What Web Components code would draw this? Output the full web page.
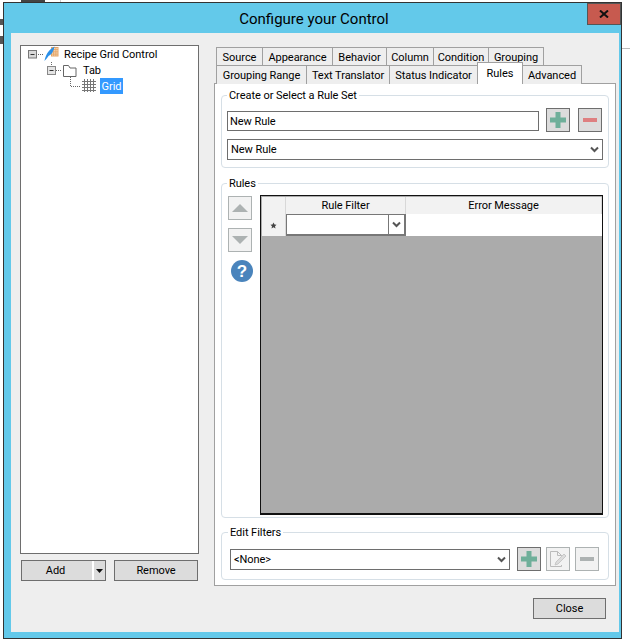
<!DOCTYPE html>
<html><head><meta charset="utf-8">
<style>
html,body{margin:0;padding:0;background:#fff;width:630px;height:643px;overflow:hidden}
body{position:relative;font:11px/15px Roboto,sans-serif;letter-spacing:-.05px;color:#000}
x-window{position:absolute;left:3px;top:2px}
.bg{position:absolute;background:#999}
</style></head><body>
<div class="bg" style="left:21px;top:0;width:24px;height:2px;background:#444"></div>
<div class="bg" style="left:60px;top:0;width:1px;height:2px;background:#ccc"></div>
<div class="bg" style="left:0;top:19px;width:3px;height:6px;background:#555"></div>
<div class="bg" style="left:0;top:36px;width:3px;height:8px;background:#555"></div>
<div class="bg" style="left:622px;top:48px;width:8px;height:1px;background:#bbb"></div>
<x-window></x-window>

<template id="t-window">
<style>
:host{display:flex;flex-direction:column;box-sizing:border-box;width:619px;height:637px;border:1px solid #333;background:#63c9ea}
.title{height:30px;flex:none;display:flex;justify-content:center;padding:7px 0 0 3px;box-sizing:border-box;font-size:15px;line-height:18px;letter-spacing:0;position:relative}
.x{position:absolute;right:0;top:0;width:34px;height:22px;box-sizing:border-box;background:#c75a4f;border:1px solid #555;display:flex;align-items:center;justify-content:center}
.client{flex:1;margin:0 2px 6px 7px;background:#eee;display:grid;grid-template-columns:179px 402px;column-gap:15px;grid-template-rows:541px auto;padding:12px 3px 0 9px;box-sizing:border-box}
.left{display:flex;flex-direction:column;gap:6px}
.btns{display:flex;gap:8px;padding:0 1px}
.foot{grid-column:1/3;display:flex;justify-content:flex-end;padding:12px 10px 0 0}
</style>
<div class="title"><span>Configure your Control</span>
<div class="x"><svg width="10" height="8" viewBox="0 0 10 8"><path d="M1 0.500L9 7.500M9 0.500L1 7.500" stroke="#111" stroke-width="2" fill="none"/></svg></div></div>
<div class="client">
<div class="left">
<x-tree></x-tree>
<div class="btns"><x-button w="85" h="21" split>Add</x-button><x-button w="84" h="21">Remove</x-button></div>
</div>
<x-config></x-config>
<div class="foot"><x-button w="73" h="21">Close</x-button></div>
</div>
</template>

<template id="t-button">
<style>
:host{display:flex;box-sizing:border-box;border:1px solid #6e6e6e;background:#dcdcdc;align-items:center;justify-content:center;position:relative}
.a{position:absolute;right:0;top:0;bottom:0;width:13px;border-left:2px solid #fff;box-sizing:border-box;display:flex;align-items:center;justify-content:center}
.lab{display:block}
</style><span class="lab"><slot></slot></span>
</template>

<template id="t-icon">
<style>
:host{display:flex;box-sizing:border-box;width:24px;height:24px;border:1px solid #6e6e6e;background:#dcdcdc;align-items:center;justify-content:center}
:host([off]){border-color:#adb2b2;background:#f2f2f2}
svg{display:block}
</style><span id="s" style="display:contents"></span>
</template>

<template id="t-tree">
<style>
:host{display:block;box-sizing:border-box;height:509px;background:#fff;border:1px solid #6e6e6e}
.row{height:16px;display:flex;align-items:center;position:relative}
.row svg{display:block;flex:none}
.sel{background:#3399ff;color:#fff;height:16px;width:23px;display:flex;justify-content:center;align-items:center}
</style>
<div class="row" style="padding-left:6px"><svg width="37" height="16" viewBox="0 0 37 16">
<rect x="1.500" y="4.500" width="8" height="7.500" fill="#d8d8d8" stroke="#777"/><path d="M3.500 8.500h4" stroke="#333"/>
<path d="M11 8.500h6" stroke="#666" stroke-dasharray="1 1"/>
<g stroke="#e3a467" fill="#fbe6cc"><rect x="24.500" y="1.500" width="6.500" height="8.500"/><path d="M26.700 1.500v8.500M28.900 1.500v8.500M24.500 3.700h6.500M24.500 5.900h6.500M24.500 8.100h6.500" fill="none"/></g>
<path d="M17.500 15C18.500 9.500 21 4 27.500 0.500C26.500 5 25 8.500 21.500 10C20 12 19 13.500 17.500 15Z" fill="#2a8fe8"/>
</svg><span>Recipe Grid Control</span></div>
<div class="row" style="padding-left:25px"><svg width="33" height="16" viewBox="0 0 33 16" style="overflow:visible">
<path d="M5.500 0v4" stroke="#666" stroke-dasharray="1 1"/>
<rect x="1.500" y="4.500" width="8" height="8" fill="#e4e4e4" stroke="#888"/><path d="M3.500 8.500h4" stroke="#333"/>
<path d="M10 8.500h6" stroke="#666" stroke-dasharray="1 1"/>
<path d="M17.500 3.500h5l1.500 2.500h6v8.500h-12.500z" fill="#fff" stroke="#666"/>
</svg><span style="margin-left:4px">Tab</span></div>
<div class="row" style="padding-left:47px"><svg width="29" height="16" viewBox="0 0 29 16" style="overflow:visible">
<path d="M2.500 -1v9.500h10" stroke="#666" stroke-dasharray="1 1" fill="none"/>
<path d="M14 3.500h14M14 6.500h14M14 9.500h14M14 12.500h14M16.500 1v13M19.500 1v13M22.500 1v13M25.500 1v13" stroke="#777" fill="none"/>
</svg><span class="sel" style="margin-left:3px">Grid</span></div>
</template>

<template id="t-tab">
<style>
:host{display:flex;box-sizing:border-box;height:19px;border:1px solid #a0a0a0;border-bottom:0;margin-left:-1px;background:#eee;align-items:center;justify-content:center}
:host([on]){height:22px;background:#fff;position:relative;z-index:2;align-items:flex-start;margin-top:-3px;padding-top:3px}
</style><slot></slot>
</template>

<template id="t-group">
<style>
:host{display:block;box-sizing:border-box;border:1px solid #d6dfe6;border-radius:4px;padding:0 5px}
.leg{display:table;margin:-8px 0 0 var(--leg-x,0);padding:0 2px;background:#fff;line-height:15px}
</style><span class="leg" id="l"></span><slot></slot>
</template>

<template id="t-input">
<style>
:host{display:flex;box-sizing:border-box;border:1px solid #6e6e6e;background:#fff;height:21px;align-items:center;padding-left:2px;position:relative}
.c{position:absolute;right:3px;top:6px}
</style><slot></slot><svg id="c" class="c" width="9" height="7" viewBox="0 0 9 7"><path d="M1 1.500L4.500 5L8 1.500" stroke="#555" stroke-width="2" fill="none"/></svg>
</template>

<template id="t-grid">
<style>
:host{display:block;box-sizing:border-box;width:343px;height:320px;border:2px solid #111;border-width:1px 1px 2px 1px;background:#ababab;padding:1px 0 0 1px}
.r{display:grid;grid-template-columns:24px 120px 196px}
.h{height:17px}
.h>div{background:#f2f2f2;border-right:1px solid #d8d8d8;border-bottom:1px solid #d0d0d0;box-sizing:border-box;text-align:center;line-height:17px}
.b{height:22px}
.b>div{background:#fff;box-sizing:border-box}
.b>.s{background:#f2f2f2;display:flex;align-items:center;justify-content:center;border-right:1px solid #d8d8d8}
.cb{display:flex;border:2px solid #777;border-width:1px 2px 2px 1px;justify-content:flex-end;align-items:stretch}
.cb i{display:flex;width:15px;border-left:1px solid #777;align-items:center;justify-content:center}
</style>
<div class="r h"><div></div><div>Rule Filter</div><div>Error Message</div></div>
<div class="r b"><div class="s"><svg width="7" height="7" viewBox="0 0 7 7"><path d="M3.500 0.500L4.500 2.500L6.500 2.700L5 4.200L5.500 6.500L3.500 5.300L1.500 6.500L2 4.200L.5 2.700L2.500 2.500Z" fill="#444"/></svg></div>
<div class="cb"><i><svg width="9" height="7" viewBox="0 0 9 7"><path d="M1 1.500L4.500 5L8 1.500" stroke="#555" stroke-width="2" fill="none"/></svg></i></div><div></div></div>
</template>

<template id="t-config">
<style>
:host{display:block;padding-top:2px}
.tabs{display:flex;padding-left:3px;align-items:flex-end}
.t2{margin-top:-1px;position:relative}
.panel{box-sizing:border-box;margin-top:-1px;height:503px;background:#fff;border:1px solid #a0a0a0;padding:11px 6px 0 6px;display:flex;flex-direction:column}
.g1{height:73px;margin-bottom:15px}
.g2{height:335px;margin-bottom:14px}
.g3{height:48px;--leg-x:1px}
.line{display:flex;align-items:center}
.line x-input{flex:none}
.rules{display:flex;padding:4px 0 0 1px;gap:8px}
.side{display:flex;flex-direction:column;gap:8px;padding-top:1px;width:24px}
.help{margin:0 0 0 3px;display:block}
</style>
<div class="tabs">
<x-tab style="width:47px">Source</x-tab><x-tab style="width:71px">Appearance</x-tab><x-tab style="width:55px">Behavior</x-tab><x-tab style="width:48px">Column</x-tab><x-tab style="width:56px">Condition</x-tab><x-tab style="width:56px">Grouping</x-tab>
</div>
<div class="tabs t2">
<x-tab style="width:91px">Grouping Range</x-tab><x-tab style="width:84px">Text Translator</x-tab><x-tab style="width:89px">Status Indicator</x-tab><x-tab on style="width:46px">Rules</x-tab><x-tab style="width:60px">Advanced</x-tab>
</div>
<div class="panel">
<x-group class="g1" legend="Create or Select a Rule Set">
<div class="line" style="gap:7px;margin-top:5px"><x-input style="width:312px;height:20px;align-self:flex-start;margin-top:3px">New Rule</x-input>
<x-icon kind="plus"></x-icon><x-icon kind="minusred" style="margin-left:1px"></x-icon></div>
<div class="line" style="margin-top:7px"><x-input caret style="width:376px;padding-left:3px">New Rule</x-input></div>
</x-group>
<x-group class="g2" legend="Rules">
<div class="rules"><div class="side"><x-icon off kind="up"></x-icon><x-icon off kind="down"></x-icon>
<svg class="help" width="22" height="22" viewBox="0 0 22 22"><circle cx="11" cy="11" r="11" fill="#4a84bc"/><text x="11" y="17" text-anchor="middle" fill="#fff" font-family="Liberation Sans" font-weight="700" font-size="17">?</text></svg></div>
<x-grid></x-grid></div>
</x-group>
<x-group class="g3" legend="Edit Filters">
<div class="line" style="gap:7px;margin-top:7px;padding-left:3px"><x-input caret style="width:280px;padding-left:3px">&lt;None&gt;</x-input>
<x-icon kind="plus"></x-icon><x-icon off kind="note" style="margin-left:-2px"></x-icon><x-icon off kind="minusgray" style="margin-left:-2px"></x-icon></div>
</x-group>
</div>
</template>

<script>
const ICONS={
plus:'<svg width="16" height="16" viewBox="0 0 16 16"><path d="M5.500 0h5v5.500h5.500v5h-5.500v5.500h-5v-5.500h-5.500v-5h5.500z" fill="#6faf9a"/></svg>',
minusred:'<svg width="14" height="4" viewBox="0 0 14 4"><rect width="14" height="4" fill="#de7f80"/></svg>',
minusgray:'<svg width="14" height="4" viewBox="0 0 14 4"><rect width="14" height="4" fill="#adb2b2"/></svg>',
up:'<svg width="16" height="8" viewBox="0 0 16 8"><path d="M8 0L16 8H0Z" fill="#adb2b2"/></svg>',
down:'<svg width="16" height="8" viewBox="0 0 16 8"><path d="M0 0H16L8 8Z" fill="#adb2b2"/></svg>',
note:'<svg width="18" height="18" viewBox="0 0 18 18"><path d="M1.500 1.500h7l4 4v4M12.500 15v1.500h-11v-15M8.500 1.500v4h4" fill="none" stroke="#bbb"/><path d="M6 15l1-3 8-8 2 2-8 8z" fill="#dcdcdc" stroke="#c8c8c8"/></svg>'
};
function def(name,tid,after){customElements.define(name,class extends HTMLElement{
constructor(){super();this.attachShadow({mode:'open'}).appendChild(document.getElementById(tid).content.cloneNode(true));}
connectedCallback(){after&&after(this,this.shadowRoot);}
});}
def('x-window','t-window');
def('x-tree','t-tree');
def('x-config','t-config');
def('x-tab','t-tab');
def('x-grid','t-grid');
def('x-button','t-button',(h,s)=>{
h.style.width=h.getAttribute('w')+'px';h.style.height=h.getAttribute('h')+'px';
if(h.hasAttribute('split')){const a=document.createElement('div');a.className='a';
a.innerHTML='<svg width="7" height="4" viewBox="0 0 7 4"><path d="M0 0H7L3.500 4Z" fill="#111"/></svg>';s.appendChild(a);s.querySelector('.lab').style.marginRight='16px';}
});
def('x-icon','t-icon',(h,s)=>{s.getElementById('s').innerHTML=ICONS[h.getAttribute('kind')];});
def('x-group','t-group',(h,s)=>{s.getElementById('l').textContent=h.getAttribute('legend');});
def('x-input','t-input',(h,s)=>{if(!h.hasAttribute('caret'))s.getElementById('c').remove();});
</script>
</body></html>
